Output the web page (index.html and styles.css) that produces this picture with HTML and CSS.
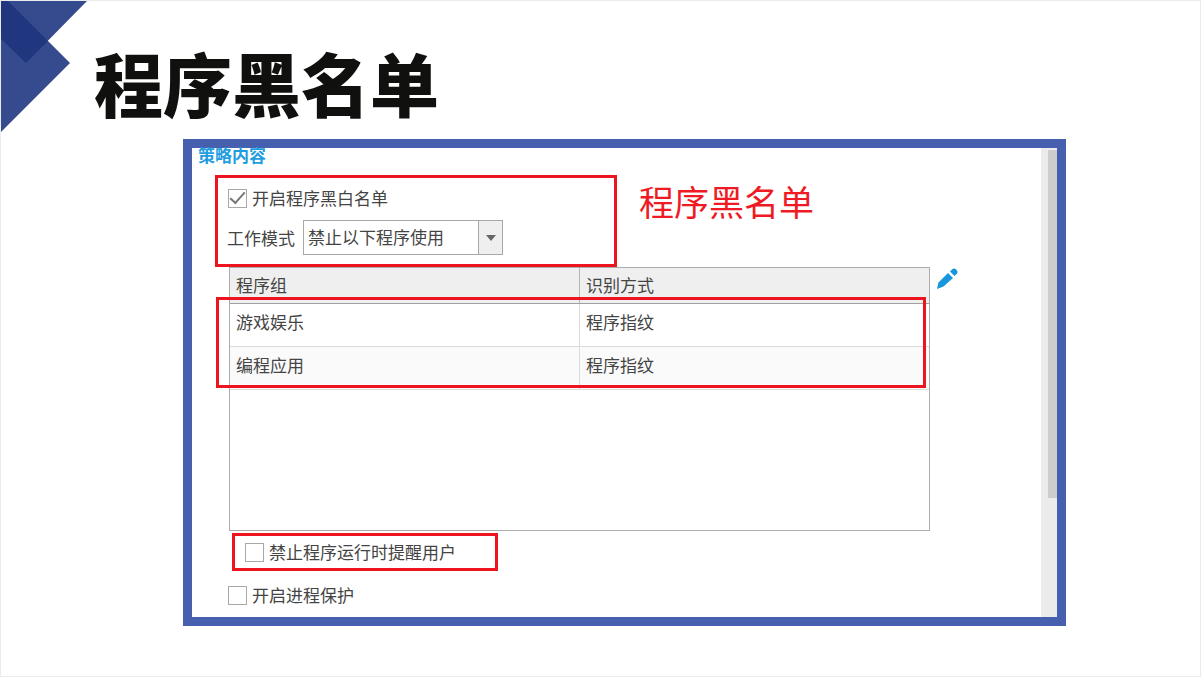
FILE: index.html
```html
<!DOCTYPE html>
<html lang="zh-CN">
<head>
<meta charset="utf-8">
<meta name="viewport" content="width=device-width, initial-scale=1">
<title>程序黑名单</title>
<link rel="stylesheet" href="styles.css">
</head>
<body>
<main class="slide">
  <svg class="corner" width="88" height="132" viewBox="0 0 88 132" aria-hidden="true">
    <path d="M0 0H86L25 62L0 38Z" fill="#364b8e"/>
    <path d="M0 0H7L69 62L0 131Z" fill="#364b8e"/>
    <path d="M0 0H7L47 40L25 62L0 38Z" fill="#20377f"/>
  </svg>
  <h1 class="title">程序黑名单</h1>
  <section class="frame">
    <div class="content">
      <h2 class="section-title">策略内容</h2>
      <div class="top">
        <div class="mark mode">
          <label class="option"><input class="check" type="checkbox" checked>开启程序黑白名单</label>
          <div class="field">
            <label for="mode">工作模式</label>
            <div class="picker">
              <select id="mode" class="select"><option>禁止以下程序使用</option></select>
              <span class="arrow"><svg width="10" height="6" viewBox="0 0 10 6" aria-hidden="true"><path d="M0 0H10L5 6Z" fill="#666"/></svg></span>
            </div>
          </div>
        </div>
        <p class="note">程序黑名单</p>
      </div>
      <div class="groups">
        <div class="list">
          <table class="table">
            <thead><tr><th>程序组</th><th>识别方式</th></tr></thead>
            <tbody>
              <tr><td>游戏娱乐</td><td>程序指纹</td></tr>
              <tr><td>编程应用</td><td>程序指纹</td></tr>
            </tbody>
          </table>
          <div class="mark rows-mark"></div>
        </div>
        <button class="edit" type="button" aria-label="编辑">
          <svg width="22" height="22" viewBox="0 0 22 22" aria-hidden="true">
            <path d="M0 22L1.500 15.500L11 6L16 11L6.500 19.500Z" fill="#1596dd"/>
            <path d="M13 4.500L15.500 2Q17 0.800 18.500 2L20 3.500Q21.200 5 20 6.500L17.500 9Z" fill="#1596dd"/>
          </svg>
        </button>
      </div>
      <div class="mark remind">
        <label class="option"><input class="check" type="checkbox">禁止程序运行时提醒用户</label>
      </div>
      <label class="option protect"><input class="check" type="checkbox">开启进程保护</label>
    </div>
    <div class="scrollbar"><div class="thumb"></div></div>
  </section>
</main>
</body>
</html>
```
FILE: styles.css
```css
* {
  box-sizing: border-box;
}

body {
  margin: 0;
  background: #fff;
  color: #444;
  font: 17px/24px "Noto Sans CJK SC", sans-serif;
}

.slide {
  position: relative;
  min-height: 100vh;
  padding: 36px 134px 50px 182px;
  border: 1px solid #e9ebef;
}

.corner {
  position: absolute;
  top: 0;
  left: 0;
}

.title {
  margin: 0 0 12px -89px;
  color: #10100e;
  font-size: 69px;
  font-weight: 900;
  line-height: 90px;
}

.frame {
  display: flex;
  border: 9px solid #465fae;
}

.content {
  flex: 1;
  min-width: 0;
  padding-bottom: 10px;
}

.section-title {
  margin: 0 0 13px 6px;
  color: #1f9de0;
  font-size: 17px;
  font-weight: 700;
  line-height: 14px;
}

.mark {
  border: 3px solid #ec141f;
}

.top {
  display: flex;
  gap: 22px;
  padding-left: 23px;
}

.mode {
  display: flex;
  flex-direction: column;
  gap: 10px;
  width: 402px;
  padding: 8px 9px 9px;
}

.option {
  display: flex;
  align-items: center;
  gap: 5px;
}

.mode .option {
  padding-left: 1px;
}

.check {
  appearance: none;
  display: grid;
  place-items: center;
  width: 19px;
  height: 19px;
  margin: 0;
  border: 1px solid #a8a8a8;
  background: #fff;
}

.check:checked::after {
  content: "";
  width: 13px;
  height: 6px;
  margin-bottom: 4px;
  border: solid #777;
  border-width: 0 0 2px 2px;
  transform: rotate(-48deg);
}

.field {
  display: flex;
  align-items: center;
  gap: 8px;
}

.picker {
  position: relative;
  width: 200px;
}

.select {
  appearance: none;
  display: block;
  width: 100%;
  height: 35px;
  padding: 0 28px 2px 4px;
  border: 1px solid #a8a8a8;
  border-radius: 0;
  background: #fff;
  color: inherit;
  font: inherit;
}

.arrow {
  position: absolute;
  top: 1px;
  right: 1px;
  bottom: 1px;
  display: grid;
  place-items: center;
  width: 24px;
  border-left: 1px solid #a8a8a8;
  background: #efefef;
  pointer-events: none;
}

.note {
  margin: 0;
  color: #ee1b24;
  font-size: 35px;
  line-height: 52px;
}

.groups {
  display: flex;
  align-items: flex-start;
  gap: 7px;
  padding: 0 82px 0 37px;
}

.list {
  position: relative;
  flex: 1;
  min-height: 264px;
  border: 1px solid #acacac;
}

.table {
  width: 100%;
  border-collapse: collapse;
  table-layout: fixed;
}

.table th,
.table td {
  height: 43px;
  padding: 0 6px 5px;
  border-bottom: 1px solid #dcdcdc;
  font-weight: 400;
  text-align: left;
}

.table th {
  height: 35px;
  padding-bottom: 0;
  border-bottom-color: #a0a0a0;
  background: #efefef;
}

.table th + th {
  border-left: 1px solid #b4b4b4;
}

.table td + td {
  border-left: 1px solid #dcdcdc;
}

.table tbody tr:nth-child(even) {
  background: #fafafa;
}

.rows-mark {
  position: absolute;
  top: 29px;
  right: 3px;
  left: -14px;
  height: 91px;
}

.edit {
  display: flex;
  padding: 0;
  border: 0;
  background: none;
}

.remind {
  width: 266px;
  margin: 2px 0 12px 40px;
  padding: 4px 10px;
}

.protect {
  margin-left: 36px;
}

.scrollbar {
  width: 16px;
  padding: 2px 0 0 7px;
  background: #ebebeb;
}

.thumb {
  height: 348px;
  background: #cdcdcd;
}
```
